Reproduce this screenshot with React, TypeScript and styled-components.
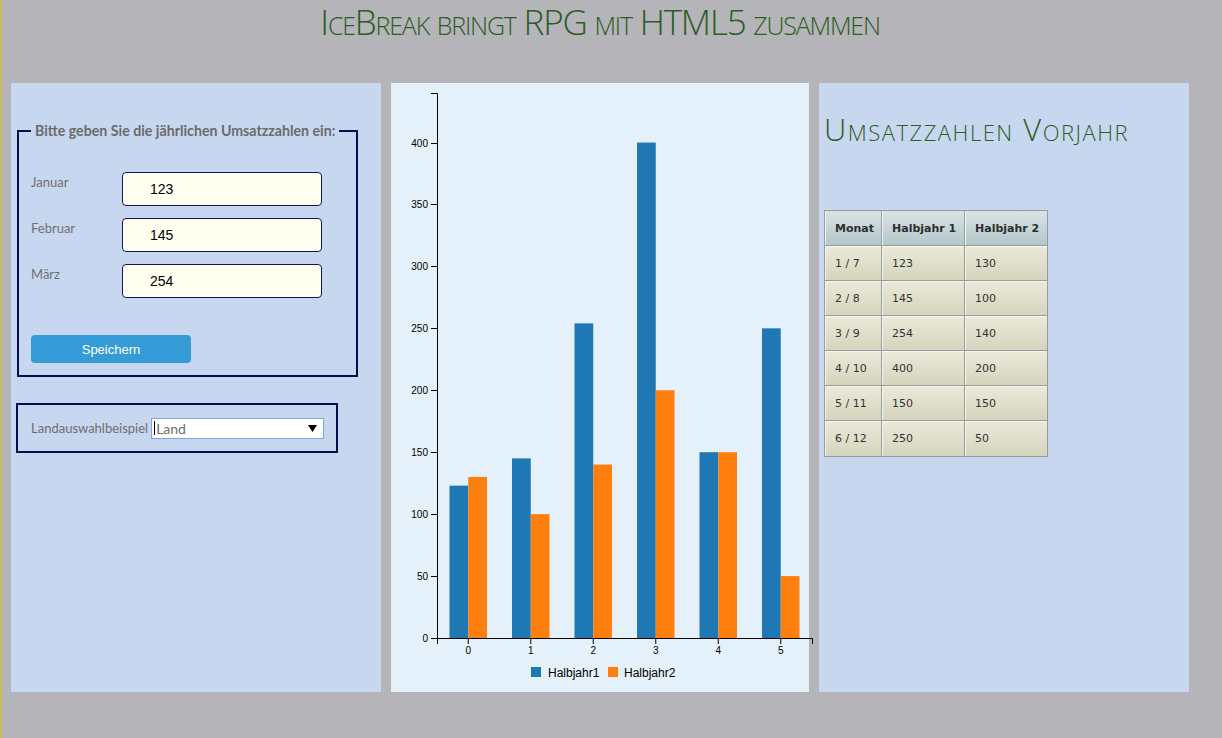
import React from "react";
import styled, { createGlobalStyle } from "styled-components";

const GlobalStyle = createGlobalStyle`
  * { box-sizing: border-box; }
  html, body { margin: 0; padding: 0; }
  body {
    background: #b4b4b9;
    border-left: 1px solid #dcc20a;
    min-height: 738px;
    font-family: "Lato", "Open Sans", sans-serif;
  }
`;

const Page = styled.div`
  width: 1178px;
  margin-left: 10px;
`;

const Title = styled.h1`
  margin: 0;
  height: 83px;
  padding-top: 4px;
  text-align: center;
  font-family: "Open Sans", sans-serif;
  font-weight: 300;
  font-size: 35px;
  letter-spacing: -1.2px;
  line-height: 1;
  font-variant: small-caps;
  color: #2b5d24;
`;

const Columns = styled.main`
  display: flex;
  gap: 10px;
  height: 609px;
`;

const Panel = styled.section<{ $tone: "blue" | "light"; $width: number }>`
  width: ${(p) => p.$width}px;
  flex: none;
  background: ${(p) => (p.$tone === "light" ? "#e4f0fa" : "#c7d7ef")};
  overflow: visible;
`;

const FormSet = styled.fieldset`
  margin: 40px 0 0 6px;
  width: 341px;
  min-width: 0;
  border: 2px solid #0b0b4f;
  padding: 33px 12px 12px;
`;

const Legend = styled.legend`
  padding: 0 4px;
  white-space: nowrap;
  font-weight: 700;
  font-size: 14.2px;
  line-height: 16px;
  color: #6b6b6b;
`;

const Stack = styled.div`
  display: flex;
  flex-direction: column;
  gap: 12px;
`;

const Row = styled.div`
  display: flex;
  align-items: flex-start;
`;

const FieldLabel = styled.label`
  width: 91px;
  padding-top: 2px;
  font-size: 13px;
  line-height: 16px;
  color: #707070;
`;

const NumberInput = styled.input`
  width: 200px;
  height: 34px;
  border: 1px solid #14145a;
  border-radius: 4px;
  background: #fffff0;
  padding: 0 0 0 27px;
  font-family: "Liberation Sans", Arial, sans-serif;
  font-size: 14px;
  color: #000;
  outline: none;
`;

const SaveButton = styled.button`
  display: block;
  margin-top: 37px;
  width: 160px;
  height: 28px;
  border: none;
  border-radius: 4px;
  background: #349bd7;
  color: #fff;
  font-family: "Liberation Sans", Arial, sans-serif;
  font-size: 13px;
  padding: 0;
`;

const CountryBox = styled.div`
  margin: 26px 0 0 5px;
  width: 322px;
  height: 50px;
  border: 2px solid #0b0b4f;
  display: flex;
  align-items: center;
  padding-left: 13px;
  gap: 3px;
`;

const BoxLabel = styled.span`
  font-size: 13px;
  color: #6e6e6e;
`;

const Combo = styled.div`
  width: 173px;
  height: 21px;
  border: 1px solid #7ea4e4;
  background: #fff;
  display: flex;
  align-items: center;
  padding: 0 6px 0 2px;
`;

const Caret = styled.span`
  width: 1px;
  height: 14px;
  background: #000;
  margin-right: 1px;
`;

const ComboText = styled.span`
  flex: 1;
  font-size: 14px;
  color: #6e6e6e;
`;

const Heading = styled.h2`
  margin: 31px 0 0 0;
  font-family: "Open Sans", sans-serif;
  font-weight: 300;
  font-size: 31px;
  letter-spacing: 1.5px;
  line-height: 1;
  font-variant: small-caps;
  color: #2b5d24;
`;

const RightInner = styled.div`
  padding-left: 5px;
`;

const Table = styled.table`
  margin-top: 65px;
  table-layout: fixed;
  width: 224px;
  border-collapse: separate;
  border-spacing: 0;
  border: 1px solid #9a9a9a;
  font-family: "DejaVu Sans", Verdana, sans-serif;
  font-size: 11px;
  color: #333;
`;

const Tr = styled.tr`
  height: 35px;
  &:last-child td { border-bottom: none; }
`;

const Th = styled.th`
  text-align: left;
  padding: 0 0 0 10px;
  font-weight: 700;
  color: #2e2e2e;
  background: linear-gradient(#d8e4e4, #b3c6ca);
  border-right: 1px solid #9a9a9a;
  border-bottom: 1px solid #9a9a9a;
  box-shadow: inset 1px 0 0 #f2f6f6;
  &:last-child { border-right: none; }
`;

const Td = styled.td`
  padding: 0 0 0 10px;
  background: linear-gradient(#eaeada, #d5d4bd);
  border-right: 1px solid #9a9a9a;
  border-bottom: 1px solid #9a9a9a;
  box-shadow: inset 1px 1px 0 #f6f6ee;
  &:last-child { border-right: none; }
`;

const ChartSvg = styled.svg`
  display: block;
  overflow: visible;
  font-family: "Liberation Sans", Arial, sans-serif;
`;

const h1 = [123, 145, 254, 400, 150, 250];
const h2 = [130, 100, 140, 200, 150, 50];

function BarChart() {
  const x0 = 46;
  const y0 = 555;
  const top = 10;
  const step = 62.5;
  const xEnd = x0 + step * 6;
  const ys = (v: number) => y0 - v * (545 / 440);
  const ticks = [0, 50, 100, 150, 200, 250, 300, 350, 400];
  return (
    <ChartSvg width={418} height={609} viewBox="0 0 418 609">
      {h1.map((v, i) => {
        const bx = x0 + step * i + 12.5;
        return (
          <g key={i}>
            <rect x={bx} y={ys(v)} width={18.75} height={y0 - ys(v)} fill="#1f77b4" />
            <rect x={bx + 18.75} y={ys(h2[i])} width={18.75} height={y0 - ys(h2[i])} fill="#ff7f0e" />
          </g>
        );
      })}
      <g fontSize={10} fill="#000">
        <path d={`M${x0 - 6},${top + 0.5}H${x0 + 0.5}V${y0 + 0.5}H${x0 - 6}`} stroke="#000" fill="none" />
        {ticks.map((t) => {
          const y = Math.round(ys(t)) + 0.5;
          return (
            <g key={t}>
              <line x1={x0 - 6} x2={x0} y1={y} y2={y} stroke="#000" />
              <text x={x0 - 9} y={y} dy="0.32em" textAnchor="end">
                {t}
              </text>
            </g>
          );
        })}
        <path d={`M${x0 + 0.5},${y0 + 6}V${y0 + 0.5}H${xEnd + 0.5}V${y0 + 6}`} stroke="#000" fill="none" />
        {h1.map((_, i) => {
          const x = x0 + step * (i + 0.5);
          return (
            <g key={i}>
              <line x1={x} x2={x} y1={y0} y2={y0 + 6} stroke="#000" />
              <text x={x} y={y0 + 9} dy="0.71em" textAnchor="middle">
                {i}
              </text>
            </g>
          );
        })}
      </g>
      <g fontSize={12} fill="#000">
        <rect x={140} y={584} width={10} height={10} fill="#1f77b4" />
        <text x={157} y={594}>Halbjahr1</text>
        <rect x={217} y={584} width={10} height={10} fill="#ff7f0e" />
        <text x={233} y={594}>Halbjahr2</text>
      </g>
    </ChartSvg>
  );
}

const rows = [
  ["1 / 7", "123", "130"],
  ["2 / 8", "145", "100"],
  ["3 / 9", "254", "140"],
  ["4 / 10", "400", "200"],
  ["5 / 11", "150", "150"],
  ["6 / 12", "250", "50"],
];

export default function App() {
  return (
    <>
      <GlobalStyle />
      <Page>
        <Title>IceBreak bringt RPG mit HTML5 zusammen</Title>
        <Columns>
          <Panel $tone="blue" $width={370}>
            <FormSet>
              <Legend>Bitte geben Sie die jährlichen Umsatzzahlen ein:</Legend>
              <Stack>
                <Row>
                  <FieldLabel>Januar</FieldLabel>
                  <NumberInput defaultValue="123" />
                </Row>
                <Row>
                  <FieldLabel>Februar</FieldLabel>
                  <NumberInput defaultValue="145" />
                </Row>
                <Row>
                  <FieldLabel>März</FieldLabel>
                  <NumberInput defaultValue="254" />
                </Row>
              </Stack>
              <SaveButton>Speichern</SaveButton>
            </FormSet>
            <CountryBox>
              <BoxLabel>Landauswahlbeispiel</BoxLabel>
              <Combo>
                <Caret />
                <ComboText>Land</ComboText>
                <svg width="9" height="7" viewBox="0 0 9 7">
                  <path d="M0 0H9L4.5 7Z" fill="#000" />
                </svg>
              </Combo>
            </CountryBox>
          </Panel>
          <Panel $tone="light" $width={418}>
            <BarChart />
          </Panel>
          <Panel $tone="blue" $width={370}>
            <RightInner>
              <Heading>Umsatzzahlen Vorjahr</Heading>
              <Table>
                <colgroup>
                  <col style={{ width: 57 }} />
                  <col style={{ width: 83 }} />
                  <col style={{ width: 82 }} />
                </colgroup>
                <thead>
                  <Tr>
                    <Th>Monat</Th>
                    <Th>Halbjahr 1</Th>
                    <Th>Halbjahr 2</Th>
                  </Tr>
                </thead>
                <tbody>
                  {rows.map((r) => (
                    <Tr key={r[0]}>
                      {r.map((c, j) => (
                        <Td key={j}>{c}</Td>
                      ))}
                    </Tr>
                  ))}
                </tbody>
              </Table>
            </RightInner>
          </Panel>
        </Columns>
      </Page>
    </>
  );
}
